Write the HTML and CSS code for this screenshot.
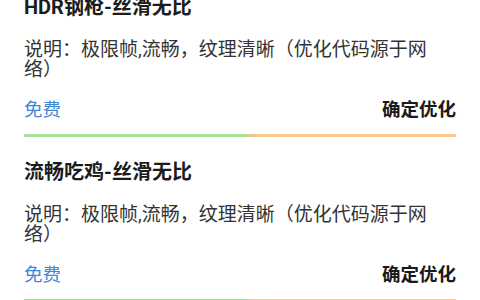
FILE: index.html
```html
<!DOCTYPE html>
<html lang="zh-CN">
<head>
    <meta charset="UTF-8">
    <meta name="viewport" content="width=device-width, initial-scale=1.0">
    <title>画质优化</title>
    <link rel="stylesheet" href="styles.css">
</head>
<body>
    <div class="list">
        <div class="card">
            <h2 class="card-title">HDR钢枪-丝滑无比</h2>
            <p class="card-desc">说明：极限帧,流畅，纹理清晰（优化代码源于网络）</p>
            <div class="card-footer">
                <span class="price">免费</span>
                <span class="action">确定优化</span>
            </div>
            <div class="divider"></div>
        </div>

        <div class="card">
            <h2 class="card-title">流畅吃鸡-丝滑无比</h2>
            <p class="card-desc">说明：极限帧,流畅，纹理清晰（优化代码源于网络）</p>
            <div class="card-footer">
                <span class="price">免费</span>
                <span class="action">确定优化</span>
            </div>
            <div class="divider"></div>
        </div>
    </div>
</body>
</html>
```

FILE: styles.css
```css
:root {
    --text-color: #1c1c1c;
    --desc-color: #333333;
    --link-color: #3f86d9;
    --green-color: #a6e19b;
    --orange-color: #fbc98c;
}

* {
    margin: 0;
    padding: 0;
    box-sizing: border-box;
}

body {
    background-color: #ffffff;
    color: var(--text-color);
    font-family: Roboto, "Noto Sans CJK SC", sans-serif;
    overflow: hidden;
}

/* page is scrolled a little, first card is cut at the top */
.list {
    margin-top: -28px;
}

.card {
    padding: 22px 24px 0;
}

.card-title {
    font-size: 20px;
    font-weight: 700;
    line-height: 27px;
    color: var(--text-color);
}

.card-desc {
    max-width: 420px;
    margin-top: 19px;
    font-size: 19px;
    line-height: 19.5px;
    color: var(--desc-color);
}

.card-footer {
    display: flex;
    justify-content: space-between;
    align-items: center;
    margin-top: 18.5px;
    font-size: 18.5px;
    line-height: 24px;
}

.price {
    color: var(--link-color);
}

.action {
    font-weight: 700;
    color: #1a1a1a;
}

.divider {
    height: 3px;
    margin-top: 12.5px;
    background: linear-gradient(to right, var(--green-color) 0%, var(--green-color) 50.5%, var(--orange-color) 54%, var(--orange-color) 100%);
}
```
